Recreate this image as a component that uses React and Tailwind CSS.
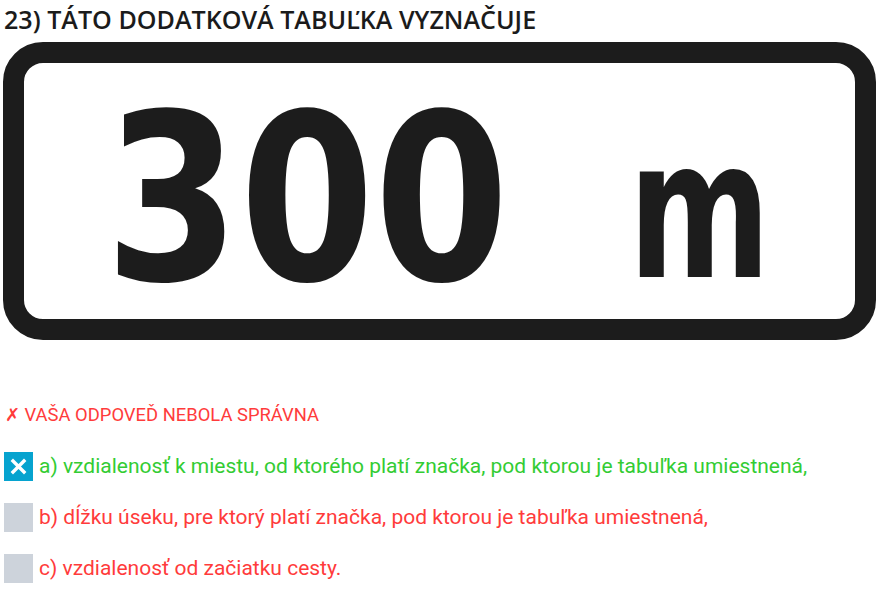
export default function App() {
  return (
    <div className="w-[888px] h-[589px] bg-white overflow-hidden">
      <div className="pl-[4px] pt-[3px] text-[25.1px] leading-[32px] font-semibold text-[#1b1b1b]" style={{ fontFamily: '"Open Sans", sans-serif' }}>
        23) TÁTO DODATKOVÁ TABUĽKA VYZNAČUJE
      </div>
      <svg className="block mt-[7px]" width="888" height="298" viewBox="0 0 888 298">
        <rect x="13.5" y="10.5" width="852" height="277" rx="29.5" ry="29.5" fill="white" stroke="#1c1c1c" strokeWidth="21" />
        <text x="105" y="238" fontSize="231" fontWeight="bold" fill="#1c1c1c" fontFamily="'DejaVu Sans', sans-serif" textLength="404" lengthAdjust="spacingAndGlyphs">300</text>
        <text x="628.5" y="235" fontSize="192" fontWeight="bold" fill="#1c1c1c" fontFamily="'DejaVu Sans', sans-serif" textLength="142" lengthAdjust="spacingAndGlyphs">m</text>
      </svg>
      <div className="mt-[64px] pl-[5px] text-[18.4px] leading-[22px] text-[#ff3b3b]" style={{ fontFamily: 'Roboto, sans-serif' }}>
        ✗ VAŠA ODPOVEĎ NEBOLA SPRÁVNA
      </div>
      <div className="mt-[26px] flex flex-col gap-[22px] pl-[4px]" style={{ fontFamily: 'Roboto, sans-serif' }}>
        <div className="flex items-center gap-[6px] h-[29px]">
          <div className="w-[29px] h-[29px] bg-[#06a3cf] flex items-center justify-center">
            <svg width="17" height="17" viewBox="0 0 17 17"><path d="M3 3 L14 14 M14 3 L3 14" stroke="white" strokeWidth="3.4" strokeLinecap="square" /></svg>
          </div>
          <span className="text-[21px] text-[#33cc33]">a) vzdialenosť k miestu, od ktorého platí značka, pod ktorou je tabuľka umiestnená,</span>
        </div>
        <div className="flex items-center gap-[6px] h-[29px]">
          <div className="w-[29px] h-[29px] bg-[#cdd3db]" />
          <span className="text-[21px] text-[#ff3b3b]">b) dĺžku úseku, pre ktorý platí značka, pod ktorou je tabuľka umiestnená,</span>
        </div>
        <div className="flex items-center gap-[6px] h-[29px]">
          <div className="w-[29px] h-[29px] bg-[#cdd3db]" />
          <span className="text-[21px] text-[#ff3b3b]">c) vzdialenosť od začiatku cesty.</span>
        </div>
      </div>
    </div>
  );
}
